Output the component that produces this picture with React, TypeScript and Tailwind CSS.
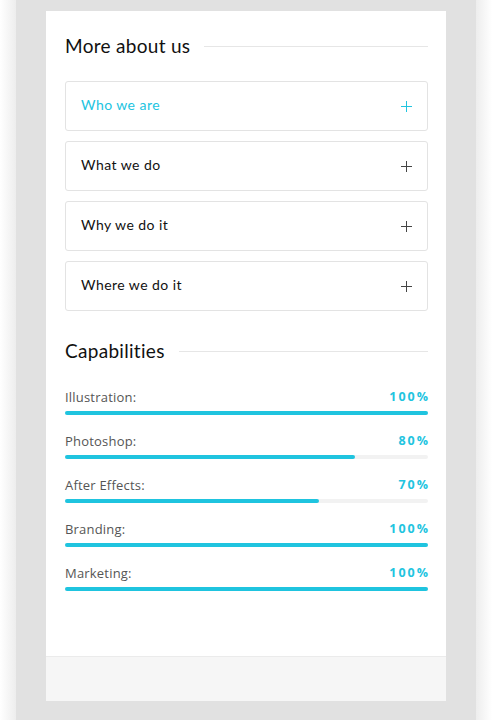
import React from "react";

const skills = [
  { name: "Illustration:", value: 100 },
  { name: "Photoshop:", value: 80 },
  { name: "After Effects:", value: 70 },
  { name: "Branding:", value: 100 },
  { name: "Marketing:", value: 100 },
];

const items = ["Who we are", "What we do", "Why we do it", "Where we do it"];

function Plus({ active }: { active: boolean }) {
  return (
    <svg width="11" height="11" viewBox="0 0 11 11" className="shrink-0">
      <path d="M5.5 0v11M0 5.5h11" stroke={active ? "#22c4df" : "#444"} strokeWidth="1" />
    </svg>
  );
}

function Heading({ text }: { text: string }) {
  return (
    <div className="flex items-center h-[24px]">
      <h2 className="text-[19px] leading-[24px] tracking-[0.3px] text-[#111] font-['Lato',sans-serif] [font-variant-ligatures:none] whitespace-nowrap -mt-[1px]">
        {text}
      </h2>
      <div className="flex-1 h-px bg-[#e6e6e6] ml-[14px]" />
    </div>
  );
}

export default function App() {
  return (
    <div className="w-full h-[720px] flex overflow-hidden bg-[#e1e1e1]">
      <div className="w-[16px] h-full bg-gradient-to-r from-[#ffffff] to-[#ededed]" />
      <div className="w-[460px] h-full bg-[#e1e1e1] pt-[11px] px-[30px] flex flex-col">
        <div className="bg-white w-[400px] pl-[19px] pr-[18px] pt-[23px] pb-[65px]">
          <Heading text="More about us" />
          <div className="mt-[23px] flex flex-col gap-[10px]">
            {items.map((t, i) => (
              <div
                key={t}
                className="h-[50px] border border-[#e3e3e3] rounded-[3px] flex items-center justify-between pl-[15px] pr-[15px]"
              >
                <span
                  className={`text-[14px] leading-[18px] -mt-[3px] font-['Lato',sans-serif] tracking-[0.45px] [font-variant-ligatures:none] ${i === 0 ? "text-[#22c4df]" : "text-[#111]"}`}
                >
                  {t}
                </span>
                <Plus active={i === 0} />
              </div>
            ))}
          </div>
          <div className="mt-[28px]">
            <Heading text="Capabilities" />
          </div>
          <div className="mt-[24px] flex flex-col gap-[16px]">
            {skills.map((s) => (
              <div key={s.name}>
                <div className="flex justify-between items-center h-[18px]">
                  <span className="text-[13px] leading-[18px] mt-[1px] tracking-[0.2px] text-[#555] font-['Open_Sans',sans-serif]">{s.name}</span>
                  <span className="text-[12.5px] leading-[18px] mt-[1px] font-bold tracking-[2px] text-[#22c4df] font-['Open_Sans',sans-serif] -mr-[2px]">
                    {s.value}%
                  </span>
                </div>
                <div className="mt-[6px] h-[4px] rounded-full bg-[#f2f2f2]">
                  <div className="h-[4px] rounded-full bg-[#1fc4df]" style={{ width: `${s.value}%` }} />
                </div>
              </div>
            ))}
          </div>
        </div>
        <div className="w-[400px] h-[45px] bg-[#f6f6f6] border-t border-[#ebebeb]" />
      </div>
      <div className="w-[16px] h-full bg-gradient-to-r from-[#ededed] to-[#ffffff]" />
    </div>
  );
}
